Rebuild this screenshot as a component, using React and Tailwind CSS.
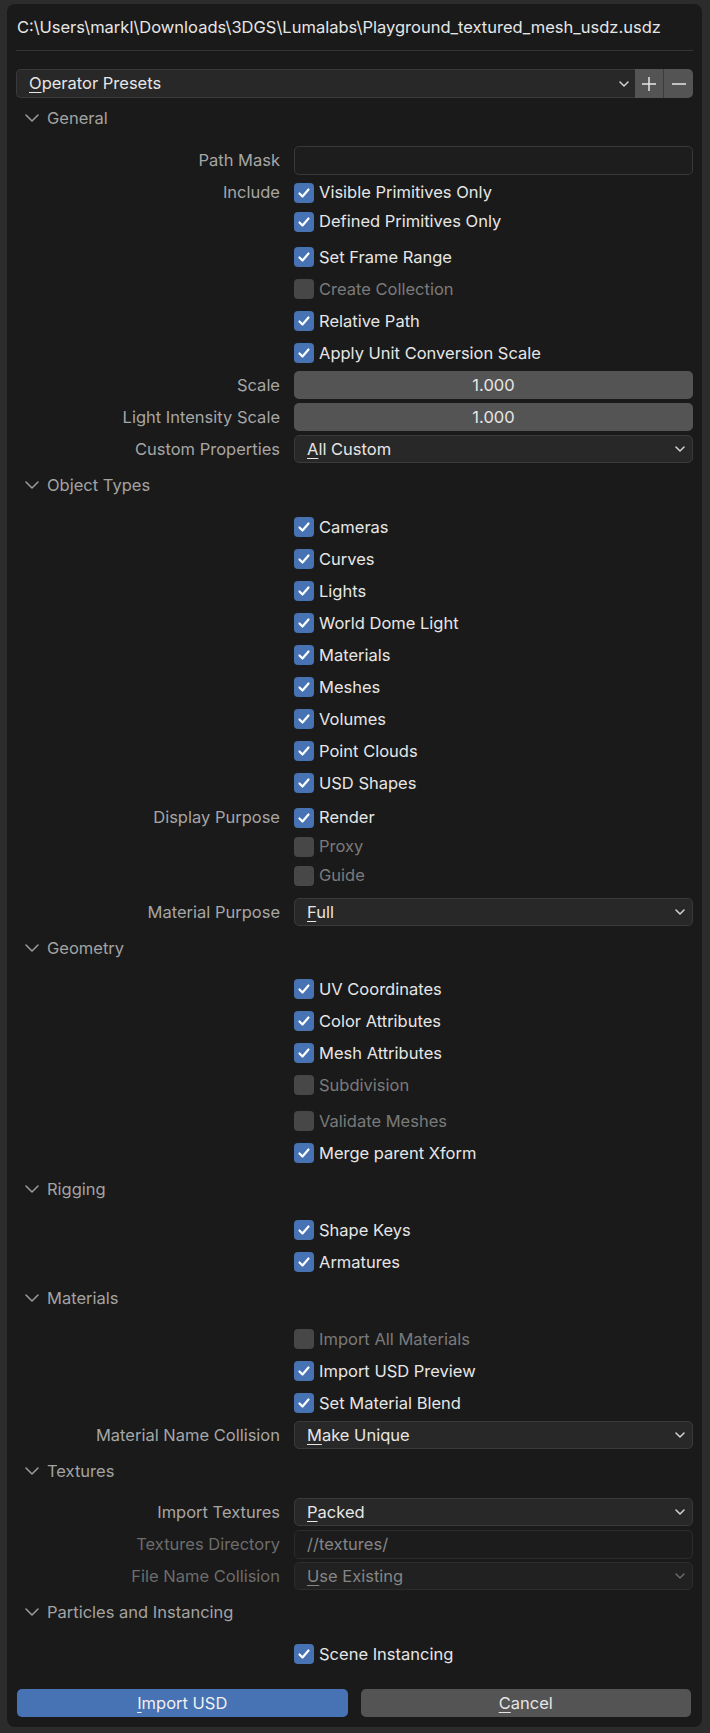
import React from 'react';

const Chevron = () => (
  <svg width="14" height="8" viewBox="0 0 14 8" className="shrink-0">
    <path d="M1 1 L7 7 L13 1" fill="none" stroke="#9c9c9c" strokeWidth="1.5" strokeLinecap="round" strokeLinejoin="round" />
  </svg>
);

const DropArrow = ({ dim }) => (
  <svg width="10" height="6" viewBox="0 0 10 6" className="shrink-0">
    <path d="M1 1 L5 5 L9 1" fill="none" stroke={dim ? '#6a6a6a' : '#d4d4d4'} strokeWidth="1.5" strokeLinecap="round" strokeLinejoin="round" />
  </svg>
);

const Header = ({ title }) => (
  <div className="mt-[2px] h-[36px] flex items-center gap-[8px] pl-[9px] text-[16.5px] text-[#a3a3a3]">
    <Chevron />
    <span>{title}</span>
  </div>
);

// label column + field column, like blender's split layout
const Row = ({ label, tight, dimLabel, className = '', children }) => (
  <div className={`grid grid-cols-[264px_399px] gap-x-[14px] items-center ${tight ? 'h-[29px]' : 'h-[32px]'} ${className}`}>
    <div className={`text-right text-[16.5px] ${dimLabel ? 'text-[#6c6c6c]' : 'text-[#a6a6a6]'}`}>{label}</div>
    <div className="flex items-center">{children}</div>
  </div>
);

const Check = ({ label, off, disabled }) => (
  <div className="flex items-center gap-[5px]">
    <div className={`w-[20px] h-[20px] rounded-[4px] flex items-center justify-center ${off ? (disabled ? 'bg-[#474747]' : 'bg-[#545454]') : 'bg-[#4772b3]'}`}>
      {!off && (
        <svg width="14" height="14" viewBox="0 0 14 14">
          <path d="M2.5 7.5 L5.5 10.5 L11.5 3.5" fill="none" stroke="#ffffff" strokeWidth="2.2" strokeLinecap="round" strokeLinejoin="round" />
        </svg>
      )}
    </div>
    <span className={`text-[16.5px] ${disabled ? 'text-[#7a7a7a]' : 'text-[#e6e6e6]'}`}>{label}</span>
  </div>
);

const CheckRow = ({ label, text, off, disabled, tight, className }) => (
  <Row label={label} tight={tight} className={className}>
    <Check label={text} off={off} disabled={disabled} />
  </Row>
);

const Select = ({ first, rest, dim }) => (
  <div className={`w-full h-[28px] rounded-[5px] border flex items-center justify-between pl-[12px] pr-[7px] text-[16.5px] ${dim ? 'bg-[#212121] border-[#2c2c2c] text-[#858585]' : 'bg-[#282828] border-[#3a3a3a] text-[#e6e6e6]'}`}>
    <span><u className="underline-offset-[3px]">{first}</u>{rest}</span>
    <DropArrow dim={dim} />
  </div>
);

const NumField = ({ value }) => (
  <div className="w-full h-[28px] rounded-[5px] bg-[#545454] flex items-center justify-center text-[16.5px] text-[#e6e6e6]">
    {value}
  </div>
);

const TextField = ({ value, dim }) => (
  <div className={`w-full h-[29px] rounded-[5px] border flex items-center pl-[12px] text-[16.5px] ${dim ? 'bg-[#1c1c1c] border-[#2c2c2c] text-[#858585]' : 'bg-[#1d1d1d] border-[#393939] text-[#e6e6e6]'}`}>
    {value}
  </div>
);

const objectTypes = ['Cameras', 'Curves', 'Lights', 'World Dome Light', 'Materials', 'Meshes', 'Volumes', 'Point Clouds', 'USD Shapes'];

export default function App() {
  return (
    <div className="min-h-[1733px] w-full bg-[#2c2c2c] pt-[4px] pl-[7px] font-[Inter,'Noto_Sans',sans-serif]">
      <div className="w-[695px] bg-[#1a1a1a] rounded-[8px] px-[9px] pb-[10px]">
        {/* Title */}
        <div className="h-[46px] flex items-center pl-[1px] text-[16.5px] text-[#e6e6e6]">
          C:\Users\markl\Downloads\3DGS\Lumalabs\Playground_textured_mesh_usdz.usdz
        </div>
        <div className="h-px bg-[#343434]" />

        {/* Presets */}
        <div className="mt-[18px] h-[29px] flex">
          <div className="flex-1 rounded-l-[5px] border border-r-0 border-[#3a3a3a] bg-[#282828] flex items-center justify-between pl-[12px] pr-[6px] text-[16.5px] text-[#e6e6e6]">
            <span><u className="underline-offset-[3px]">O</u>perator Presets</span>
            <DropArrow />
          </div>
          <div className="w-[29px] bg-[#545454] flex items-center justify-center border-r border-[#3c3c3c]">
            <svg width="16" height="16" viewBox="0 0 16 16">
              <path d="M8 1 V15 M1 8 H15" stroke="#e6e6e6" strokeWidth="1.5" />
            </svg>
          </div>
          <div className="w-[29px] bg-[#545454] rounded-r-[5px] flex items-center justify-center">
            <svg width="16" height="16" viewBox="0 0 16 16">
              <path d="M1 8 H15" stroke="#e6e6e6" strokeWidth="1.5" />
            </svg>
          </div>
        </div>

        {/* General */}
        <Header title="General" />
        <Row label="Path Mask" className="mt-[8px]">
          <TextField value="" />
        </Row>
        <CheckRow label="Include" text="Visible Primitives Only" tight className="mt-[2px]" />
        <CheckRow text="Defined Primitives Only" tight />
        <CheckRow text="Set Frame Range" className="mt-[5px]" />
        <CheckRow text="Create Collection" off disabled />
        <CheckRow text="Relative Path" />
        <CheckRow text="Apply Unit Conversion Scale" />
        <Row label="Scale"><NumField value="1.000" /></Row>
        <Row label="Light Intensity Scale"><NumField value="1.000" /></Row>
        <Row label="Custom Properties"><Select first="A" rest="ll Custom" /></Row>

        {/* Object Types */}
        <Header title="Object Types" />
        <div className="mt-[8px]">
          {objectTypes.map(t => (
            <CheckRow key={t} text={t} />
          ))}
        </div>
        <CheckRow label="Display Purpose" text="Render" tight className="mt-[4px]" />
        <CheckRow text="Proxy" off disabled tight />
        <CheckRow text="Guide" off disabled tight />
        <Row label="Material Purpose" className="mt-[6px]"><Select first="F" rest="ull" /></Row>

        {/* Geometry */}
        <Header title="Geometry" />
        <div className="mt-[7px]">
          <CheckRow text="UV Coordinates" />
          <CheckRow text="Color Attributes" />
          <CheckRow text="Mesh Attributes" />
          <CheckRow text="Subdivision" off disabled />
        </div>
        <CheckRow text="Validate Meshes" off disabled className="mt-[4px]" />
        <CheckRow text="Merge parent Xform" />

        {/* Rigging */}
        <Header title="Rigging" />
        <div className="mt-[7px]">
          <CheckRow text="Shape Keys" />
          <CheckRow text="Armatures" />
        </div>

        {/* Materials */}
        <Header title="Materials" />
        <div className="mt-[7px]">
          <CheckRow text="Import All Materials" off disabled />
          <CheckRow text="Import USD Preview" />
          <CheckRow text="Set Material Blend" />
          <Row label="Material Name Collision"><Select first="M" rest="ake Unique" /></Row>
        </div>

        {/* Textures */}
        <Header title="Textures" />
        <div className="mt-[7px]">
          <Row label="Import Textures"><Select first="P" rest="acked" /></Row>
          <Row label="Textures Directory" dimLabel><TextField value="//textures/" dim /></Row>
          <Row label="File Name Collision" dimLabel><Select first="U" rest="se Existing" dim /></Row>
        </div>

        {/* Particles and Instancing */}
        <Header title="Particles and Instancing" />
        <CheckRow text="Scene Instancing" className="mt-[8px]" />

        {/* Buttons */}
        <div className="mt-[19px] flex gap-[13px] pl-[1px] pr-[2px]">
          <button className="flex-1 h-[28px] rounded-[5px] bg-[#4772b3] text-[16.5px] text-[#f0f0f0]">
            <u className="underline-offset-[3px]">I</u>mport USD
          </button>
          <button className="flex-1 h-[28px] rounded-[5px] bg-[#545454] text-[16.5px] text-[#e6e6e6]">
            <u className="underline-offset-[3px]">C</u>ancel
          </button>
        </div>
      </div>
    </div>
  );
}
